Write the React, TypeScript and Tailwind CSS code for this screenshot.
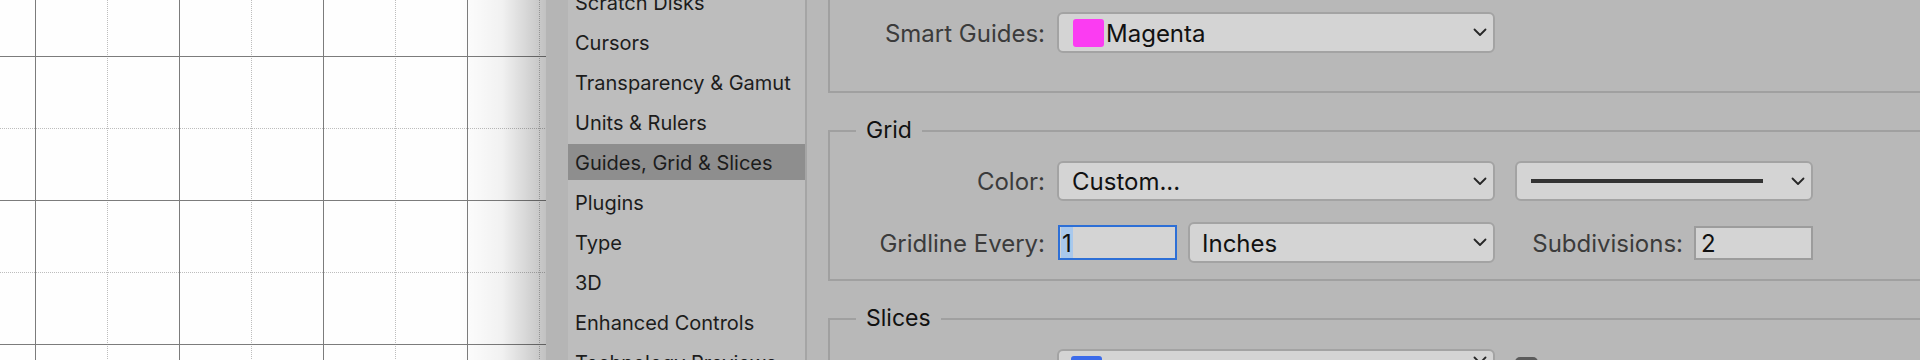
import React from "react";

const solidX = [35.5, 179.5, 323.5, 467.5];
const dotX = [107.5, 251.5, 395.5, 539.5];
const solidY = [56.5, 200.5, 344.5];
const dotY = [128.5, 272.5];

const navItems = [
  "Scratch Disks",
  "Cursors",
  "Transparency & Gamut",
  "Units & Rulers",
  "Guides, Grid & Slices",
  "Plugins",
  "Type",
  "3D",
  "Enhanced Controls",
  "Technology Previews",
];

function Chevron() {
  return (
    <svg width="14" height="9" viewBox="0 0 14 9" className="shrink-0">
      <polyline points="1.5,1.5 7,7 12.5,1.5" fill="none" stroke="#262626" strokeWidth="1.8" strokeLinecap="round" strokeLinejoin="round" />
    </svg>
  );
}

function Select({
  children,
  className,
}: {
  children?: React.ReactNode;
  className?: string;
}) {
  return (
    <div
      className={`flex items-center justify-between rounded-[6px] border-2 border-[#a3a3a3] bg-[#d4d4d4] pr-[6px] ${className ?? ""}`}
    >
      <div className="flex min-w-0 items-center">{children}</div>
      <Chevron />
    </div>
  );
}

function Swatch({ color }: { color: string }) {
  return <span className={`h-[28px] w-[31px] shrink-0 rounded-[3px] ${color}`} />;
}

function GridCanvas() {
  return (
    <div className="relative h-full w-[546px] shrink-0 bg-[#fefefe]">
      <svg width="546" height="360" className="block">
        {dotX.map((x) => (
          <line key={"dx" + x} x1={x} y1={0} x2={x} y2={360} stroke="#bdbdbd" strokeWidth="1" strokeDasharray="1 1" />
        ))}
        {dotY.map((y) => (
          <line key={"dy" + y} x1={0} y1={y} x2={546} y2={y} stroke="#bdbdbd" strokeWidth="1" strokeDasharray="1 1" />
        ))}
        {solidX.map((x) => (
          <line key={"sx" + x} x1={x} y1={0} x2={x} y2={360} stroke="#7c7c7c" strokeWidth="1" />
        ))}
        {solidY.map((y) => (
          <line key={"sy" + y} x1={0} y1={y} x2={546} y2={y} stroke="#7c7c7c" strokeWidth="1" />
        ))}
      </svg>
      {/* window shadow falling on the canvas */}
      <div className="absolute inset-y-0 right-0 w-[88px] bg-linear-to-r from-transparent via-black/[0.05] to-black/[0.24]" />
    </div>
  );
}

function Sidebar() {
  return (
    <div className="h-full w-[239px] shrink-0 overflow-hidden border-r-2 border-[#a5a5a5] bg-[#bdbdbd]">
      <div className="-mt-[16px] flex flex-col gap-[4px]">
        {navItems.map((item) => (
          <div
            key={item}
            className={`flex h-[36px] items-center whitespace-nowrap pl-[7px] pt-[2px] text-[20px] text-[#1c1c1c] ${
              item === "Guides, Grid & Slices" ? "bg-[#8e8e8e]" : ""
            }`}
          >
            {item}
          </div>
        ))}
      </div>
    </div>
  );
}

function GroupTitle({ title }: { title: string }) {
  return (
    <div className="-mt-[15px] ml-[26px] w-fit bg-[#b8b8b8] px-[10px] pb-[2px] text-[23px] leading-[26px] text-[#111]">
      {title}
    </div>
  );
}

function Label({ children }: { children: React.ReactNode }) {
  return (
    <div className="w-[215px] shrink-0 whitespace-nowrap pt-[2px] text-right text-[24px] text-[#3b3b3b]">
      {children}
    </div>
  );
}

export default function App() {
  return (
    <div className="flex h-[360px] w-[1920px] overflow-hidden bg-[#b8b8b8] font-['Inter',sans-serif]">
      <GridCanvas />
      <div className="w-[22px] shrink-0 bg-[#b5b5b5]" />
      <Sidebar />
      <div className="ml-[21px] flex min-w-0 flex-1 flex-col">
        {/* Smart Guides group (top clipped) */}
        <div className="-mt-[40px] w-[1200px] shrink-0 border-2 border-[#a0a0a0] pt-[50px] pb-[38px]">
          <div className="flex items-center gap-[12px]">
            <Label>Smart Guides:</Label>
            <Select className="h-[41px] w-[438px] pl-[14px]">
              <Swatch color="bg-[#fb3cf2]" />
              <span className="ml-[2px] pt-[2px] text-[24px] text-[#111]">Magenta</span>
            </Select>
          </div>
        </div>

        {/* Grid group */}
        <div className="mt-[37px] w-[1200px] shrink-0 border-2 border-[#a0a0a0] pb-[16px]">
          <GroupTitle title="Grid" />
          <div className="mt-[16px] flex flex-col gap-[21px]">
            <div className="flex h-[40px] items-center gap-[12px]">
              <Label>Color:</Label>
              <Select className="h-[40px] w-[438px] pl-[13px]">
                <span className="pt-[2px] text-[24px] text-[#111]">Custom...</span>
              </Select>
              <Select className="ml-[8px] h-[40px] w-[298px] pl-[14px]">
                <span className="h-[4px] w-[232px] bg-[#333]" />
              </Select>
            </div>
            <div className="flex h-[41px] items-center gap-[12px]">
              <Label>Gridline Every:</Label>
              <div className="flex items-center gap-[11px]">
                <div className="ml-[1px] flex h-[35px] w-[119px] items-stretch border-2 border-[#2d6fd6] bg-[#d4d4d4] pl-[1px]">
                  <span className="flex items-center bg-[#a9c8ec] px-[1px] pt-[2px] text-[24px] leading-none text-[#111]">1</span>
                </div>
                <Select className="h-[41px] w-[307px] pl-[12px]">
                  <span className="pt-[2px] text-[24px] text-[#111]">Inches</span>
                </Select>
              </div>
              <div className="ml-[8px] flex w-[298px] items-center justify-end gap-[11px]">
                <span className="whitespace-nowrap pt-[2px] text-[24px] text-[#3b3b3b]">Subdivisions:</span>
                <div className="flex h-[34px] w-[119px] items-center border-2 border-[#9c9c9c] bg-[#d4d4d4] pl-[5px] pt-[2px] text-[24px] text-[#111]">
                  2
                </div>
              </div>
            </div>
          </div>
        </div>

        {/* Slices group (bottom clipped) */}
        <div className="mt-[37px] w-[1200px] shrink-0 border-2 border-[#a0a0a0] pb-[20px]">
          <GroupTitle title="Slices" />
          <div className="mt-[16px] flex items-center gap-[12px]">
            <div className="w-[215px] shrink-0" />
            <Select className="h-[41px] w-[438px] items-start pl-[12px] pt-[5px]">
              <Swatch color="bg-[#3b6bea]" />
            </Select>
            <div className="ml-[8px] mt-[8px] h-[23px] w-[23px] self-start rounded-[5px] bg-[#5b5b5b]" />
          </div>
        </div>
      </div>
    </div>
  );
}
